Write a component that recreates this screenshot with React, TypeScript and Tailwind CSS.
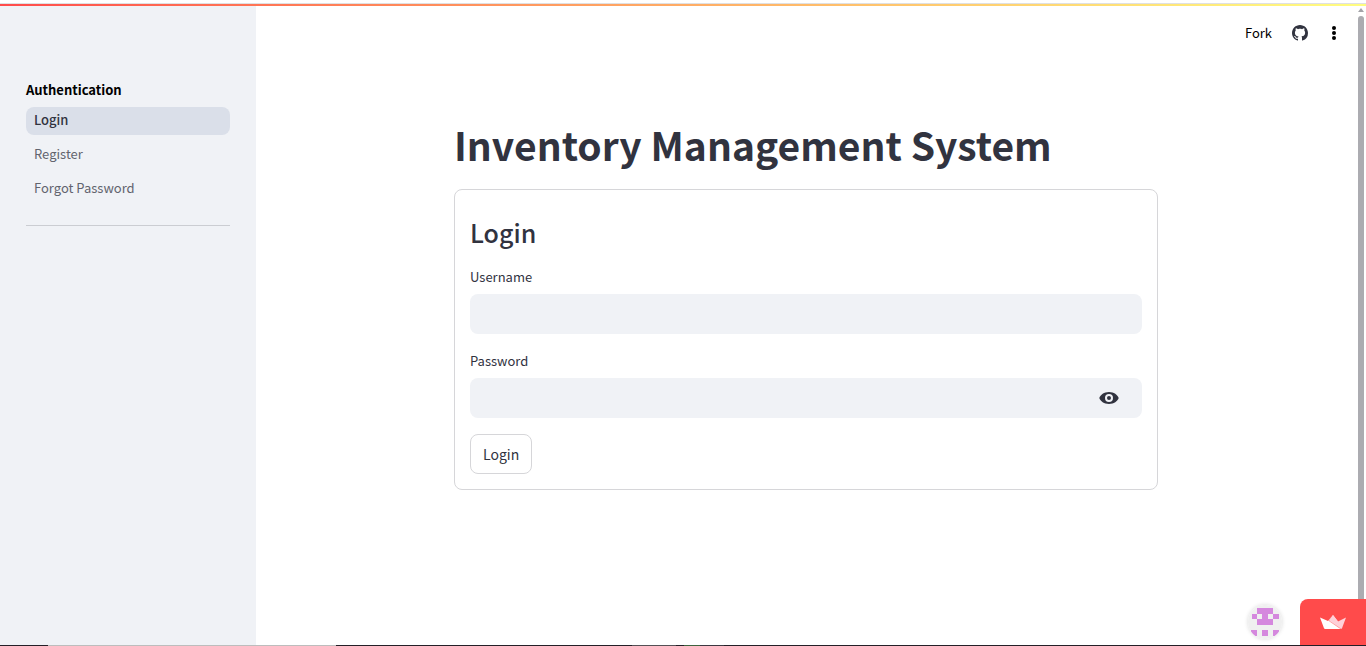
import { useState } from "react";

const NAV = ["Login", "Register", "Forgot Password"];

function Field({ id, label, password = false }: { id: string; label: string; password?: boolean }) {
  const [shown, setShown] = useState(false);
  return (
    <div className="mt-4">
      <label htmlFor={id} className="block text-[13px] leading-[22px]">
        {label}
      </label>
      <div className="mt-1.5 flex h-10 items-center rounded-lg bg-[#f0f2f6] pr-[19px]">
        <input
          id={id}
          type={password && !shown ? "password" : "text"}
          className="h-full min-w-0 flex-1 bg-transparent px-3 text-sm outline-none"
        />
        {password && (
          <button type="button" aria-label="Show password" onClick={() => setShown(!shown)} className="p-1">
            <svg viewBox="0 0 20 20" className="size-5" fill="currentColor" fillRule="evenodd" aria-hidden="true">
              <path d="M10 4C5 4 1.500 6.800 0.300 10 1.500 13.200 5 16 10 16s8.500-2.800 9.700-6C18.500 6.800 15 4 10 4zM10 6a4 4 0 1 1 0 8 4 4 0 0 1 0-8zM10 8a2 2 0 1 0 0 4 2 2 0 0 0 0-4z" />
            </svg>
          </button>
        )}
      </div>
    </div>
  );
}

export default function App() {
  return (
    <div className="flex min-h-screen flex-col bg-white font-['Noto_Sans_CJK_SC','Noto_Sans',sans-serif] text-[#31333f]">
      <div className="mt-[3px] h-px bg-[#dfe0e2]" />
      <div className="h-0.5 bg-linear-to-r from-[#ff4b4b] to-[#fffd80]" />
      <div className="flex flex-1">
        <aside className="w-64 shrink-0 bg-[#f0f2f6] px-[26px] pt-[72px]">
          <h2 className="text-[13px] leading-6 font-bold text-black">Authentication</h2>
          <nav className="mt-[5px] flex flex-col gap-1.5 border-b border-[#cbcdd2] pb-[22px]">
            {NAV.map((name, i) => (
              <a
                key={name}
                href="#"
                className={
                  i === 0
                    ? "h-7 rounded-lg bg-[#dadfe9] px-2 text-[13px] leading-[26px] font-medium"
                    : "h-7 rounded-lg px-2 text-[13px] leading-[26px] text-[#62646e]"
                }
              >
                {name}
              </a>
            ))}
          </nav>
        </aside>
        <div className="flex min-w-0 flex-1 flex-col">
          <header className="flex h-[54px] items-center justify-end gap-5 pr-4">
            <button type="button" className="text-[13px] leading-6 text-black">Fork</button>
            <a href="#" aria-label="View source on GitHub">
              <svg viewBox="0 0 16 16" className="size-4" fill="currentColor" aria-hidden="true">
                <path d="M8 0C3.58 0 0 3.58 0 8c0 3.54 2.29 6.53 5.47 7.59.4.07.55-.17.55-.38 0-.19-.01-.82-.01-1.49-2.01.37-2.53-.49-2.69-.94-.09-.23-.48-.94-.82-1.13-.28-.15-.68-.52-.01-.53.63-.01 1.08.58 1.23.82.72 1.21 1.87.87 2.33.66.07-.52.28-.87.51-1.07-1.78-.2-3.64-.89-3.64-3.95 0-.87.31-1.59.82-2.15-.08-.2-.36-1.02.08-2.12 0 0 .67-.21 2.2.82.64-.18 1.32-.27 2-.27s1.36.09 2 .27c1.53-1.04 2.2-.82 2.2-.82.44 1.1.16 1.92.08 2.12.51.56.82 1.27.82 2.15 0 3.07-1.87 3.75-3.65 3.95.29.25.54.73.54 1.48 0 1.07-.01 1.93-.01 2.2 0 .21.15.46.55.38A8.01 8.01 0 0 0 16 8c0-4.42-3.58-8-8-8z" />
              </svg>
            </a>
            <button type="button" aria-label="Menu" className="px-0.5">
              <svg viewBox="0 0 8 16" className="h-4 w-2" fill="#000" aria-hidden="true">
                <circle cx="4" cy="3" r="2" />
                <circle cx="4" cy="8" r="2" />
                <circle cx="4" cy="13" r="2" />
              </svg>
            </button>
          </header>
          <main className="mx-auto w-full max-w-[704px] pt-[58px]">
            <h1 className="text-[39px] leading-[53px] font-bold">Inventory Management System</h1>
            <form className="mt-[18px] rounded-lg border border-[#d6d6d9] p-[15px]">
              <h2 className="pt-2.5 text-[25px] leading-[34px] font-medium">Login</h2>
              <div className="pt-px">
                <Field id="username" label="Username" />
                <Field id="password" label="Password" password />
              </div>
              <button type="button" className="mt-4 h-10 rounded-lg border border-[#d6d6d9] px-3 text-sm">
                Login
              </button>
            </form>
          </main>
        </div>
        <div className="flex w-2.5 shrink-0 flex-col items-center pt-0.5">
          <svg viewBox="0 0 6 4" className="h-1 w-1.5" fill="#a3a3a8" aria-hidden="true">
            <path d="M3 0l3 4H0z" />
          </svg>
          <div className="mt-1 w-1.5 flex-1 rounded-t-full bg-[#acacb1]" />
        </div>
      </div>
      <div className="flex h-px bg-[#241f27]">
        <div className="ml-12 w-72 bg-[#bdbdbd]" />
        <div className="ml-[296px] w-11 bg-[#555055]" />
        <div className="ml-2 w-4 bg-[#3f633f]" />
        <div className="w-6 bg-[#3d3840]" />
      </div>
      <div className="fixed right-0 bottom-px flex items-center gap-[18px]">
        <a href="#" aria-label="Creator profile" className="rounded-full shadow-[0_0_4px_rgba(0,0,0,0.15)]">
          <svg viewBox="0 0 34 34" className="size-[34px] rounded-full" aria-hidden="true">
            <rect width="34" height="34" fill="#f0f0f0" />
            <path
              fill="#d588de"
              d="M9 3h16v6h6v5h-6v6H9v-6H4V9h5zM3 25h6v6H3zM14 25h6v6h-6zM25 25h6v6h-6z"
            />
            <path fill="#f0f0f0" d="M9 9h5v5H9zM20 9h5v5h-5z" />
          </svg>
        </a>
        <a href="#" aria-label="Hosted with Streamlit" className="flex h-[46px] w-[66px] items-center justify-center rounded-tl-lg bg-[#ff4b4b]">
          <svg viewBox="0 0 28 16" className="h-4 w-7" aria-hidden="true">
            <path fill="#ffd0d8" d="M14 1l5 6.500L27 3.500 23 14.200q-.3.800-1.200.8L10 7z" />
            <path fill="#fff" d="M14 1L9 7 1 3.500 5 14.200q.3.800 1.200.8H22L10 6.500z" />
            <path fill="#ffd0d8" d="M14 1l5 6.500 2.500 7L10.500 6z" />
            <path stroke="#ff4b4b" strokeWidth="0.4" d="M9.500 6.500L22 15" />
          </svg>
        </a>
      </div>
    </div>
  );
}
